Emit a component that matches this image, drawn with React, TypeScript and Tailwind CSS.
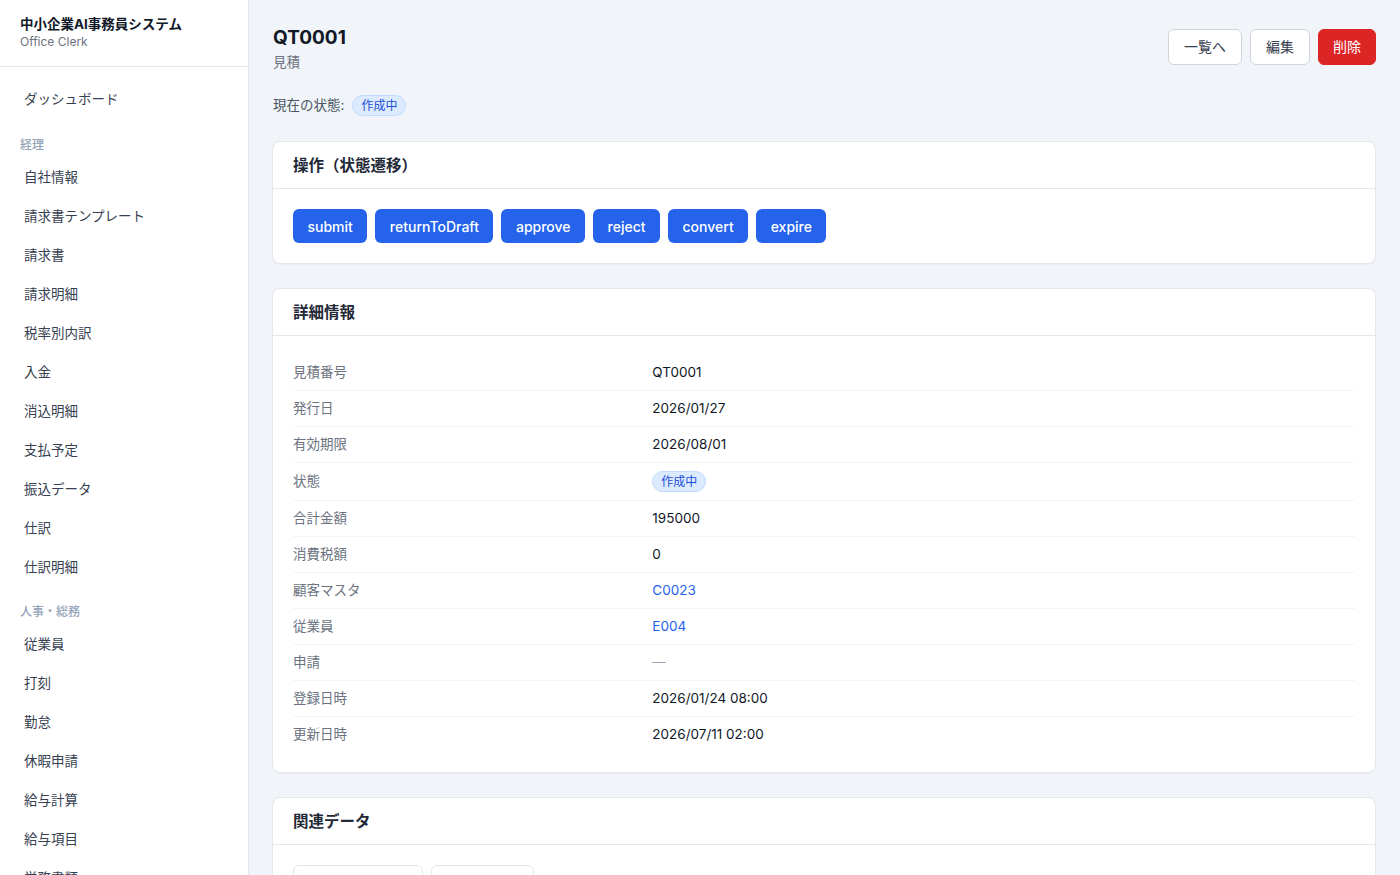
import React from "react";

const font = { fontFamily: '"Inter", "Noto Sans CJK JP", "Noto Sans", sans-serif' };

type NavSection = { label?: string; items: string[] };

const nav: NavSection[] = [
  { items: ["ダッシュボード"] },
  {
    label: "経理",
    items: ["自社情報", "請求書テンプレート", "請求書", "請求明細", "税率別内訳", "入金", "消込明細", "支払予定", "振込データ", "仕訳", "仕訳明細"],
  },
  {
    label: "人事・総務",
    items: ["従業員", "打刻", "勤怠", "休暇申請", "給与計算", "給与項目", "労務書類", "社会保険"],
  },
];

type Row = { label: string; value: string; kind?: "badge" | "link" | "empty" };

const rows: Row[] = [
  { label: "見積番号", value: "QT0001" },
  { label: "発行日", value: "2026/01/27" },
  { label: "有効期限", value: "2026/08/01" },
  { label: "状態", value: "作成中", kind: "badge" },
  { label: "合計金額", value: "195000" },
  { label: "消費税額", value: "0" },
  { label: "顧客マスタ", value: "C0023", kind: "link" },
  { label: "従業員", value: "E004", kind: "link" },
  { label: "申請", value: "—", kind: "empty" },
  { label: "登録日時", value: "2026/01/24 08:00" },
  { label: "更新日時", value: "2026/07/11 02:00" },
];

const actions = ["submit", "returnToDraft", "approve", "reject", "convert", "expire"];

function Badge() {
  return (
    <span className="inline-flex h-[21px] items-center rounded-full border border-[#bfdbfe] bg-[#dbeafe] px-2 text-xs leading-none text-[#1d4ed8]">
      作成中
    </span>
  );
}

function Card({ title, children }: { title: string; children: React.ReactNode }) {
  return (
    <div className="rounded-lg border border-[#e5e7eb] bg-white shadow-[0_1px_2px_rgba(0,0,0,0.04)]">
      <div className="flex h-[47px] items-center border-b border-[#e5e7eb] px-5 pt-px text-[15.5px] font-bold text-[#1f2937]">
        {title}
      </div>
      {children}
    </div>
  );
}

export default function App() {
  return (
    <div className="flex h-[875px] w-[1400px] overflow-hidden bg-[#f1f5f9]" style={font}>
      <aside className="flex h-full w-[249px] shrink-0 flex-col overflow-hidden border-r border-[#e5e7eb] bg-white">
        <div className="border-b border-[#e5e7eb] px-5 pb-4 pt-[14px]">
          <div className="text-[13.5px] font-bold leading-5 text-[#111827]">中小企業AI事務員システム</div>
          <div className="text-xs leading-4 text-[#6b7280]">Office Clerk</div>
        </div>
        <nav className="pt-[13px]">
          {nav.map((sec, i) => (
            <div key={i}>
              {sec.label && (
                <div className={`px-5 pb-[5px] text-xs font-medium leading-4 text-[#94a3b8] ${i === 1 ? "pt-[18px]" : "pt-[17px]"}`}>
                  {sec.label}
                </div>
              )}
              {sec.items.map((it) => (
                <div key={it} className="flex h-[39px] items-center px-6 text-[13.5px] text-[#374151]">
                  {it}
                </div>
              ))}
            </div>
          ))}
        </nav>
      </aside>

      <main className="h-full flex-1 overflow-hidden pl-[23px] pr-6 pt-6">
        <div className="flex items-start justify-between">
          <div className="pl-px">
            <h1 className="text-[19px] font-bold leading-7 text-[#111827]">QT0001</h1>
            <div className="text-[13.5px] leading-5 text-[#6b7280]">見積</div>
          </div>
          <div className="mt-[5px] flex gap-2">
            <button className="h-9 rounded-md border border-[#d1d5db] bg-white px-[15px] text-sm text-[#374151]">一覧へ</button>
            <button className="h-9 rounded-md border border-[#d1d5db] bg-white px-[15px] text-sm text-[#374151]">編集</button>
            <button className="h-9 rounded-md border border-[#dc2626] bg-[#dc2626] px-[14px] text-sm text-white">削除</button>
          </div>
        </div>

        <div className="mt-[23px] flex h-[21px] items-center gap-2 pl-px text-[13.5px] text-[#4b5563]">
          <span>現在の状態:</span>
          <Badge />
        </div>

        <div className="mt-[25px] flex flex-col gap-6">
          <Card title="操作（状態遷移）">
            <div className="flex gap-2 p-5">
              {actions.map((a) => (
                <button key={a} className="h-[34px] rounded-md bg-[#2563eb] px-[14.5px] pt-px text-sm font-medium text-white">
                  {a}
                </button>
              ))}
            </div>
          </Card>

          <Card title="詳細情報">
            <div className="px-5 pb-[20px] pt-[19px]">
              {rows.map((r, i) => (
                <div
                  key={r.label}
                  className={`grid grid-cols-3 items-center gap-4 py-2 text-[13.5px] leading-[19px] ${i < rows.length - 1 ? "border-b border-[#f1f5f9]" : ""}`}
                >
                  <div className="text-[#6b7280]">{r.label}</div>
                  <div className="col-span-2">
                    {r.kind === "badge" ? (
                      <Badge />
                    ) : r.kind === "link" ? (
                      <span className="text-[#2563eb]">{r.value}</span>
                    ) : r.kind === "empty" ? (
                      <span className="text-[#9ca3af]">{r.value}</span>
                    ) : (
                      <span className="text-[#111827]">{r.value}</span>
                    )}
                  </div>
                </div>
              ))}
            </div>
          </Card>

          <Card title="関連データ">
            <div className="flex gap-2 px-5 pt-5">
              <div className="flex h-9 items-center gap-1.5 rounded-md border border-[#e5e7eb] bg-white pl-[14px] pr-[33px] text-[13.5px]">
                <span className="text-[#2563eb]">見積明細</span>
                <span className="text-xs text-[#9ca3af]">(12)</span>
              </div>
              <div className="flex h-9 items-center gap-1.5 rounded-md border border-[#e5e7eb] bg-white pl-[14px] pr-[33px] text-[13.5px]">
                <span className="text-[#2563eb]">受注</span>
                <span className="text-xs text-[#9ca3af]">(12)</span>
              </div>
            </div>
            <div className="h-40" />
          </Card>
        </div>
      </main>
    </div>
  );
}
